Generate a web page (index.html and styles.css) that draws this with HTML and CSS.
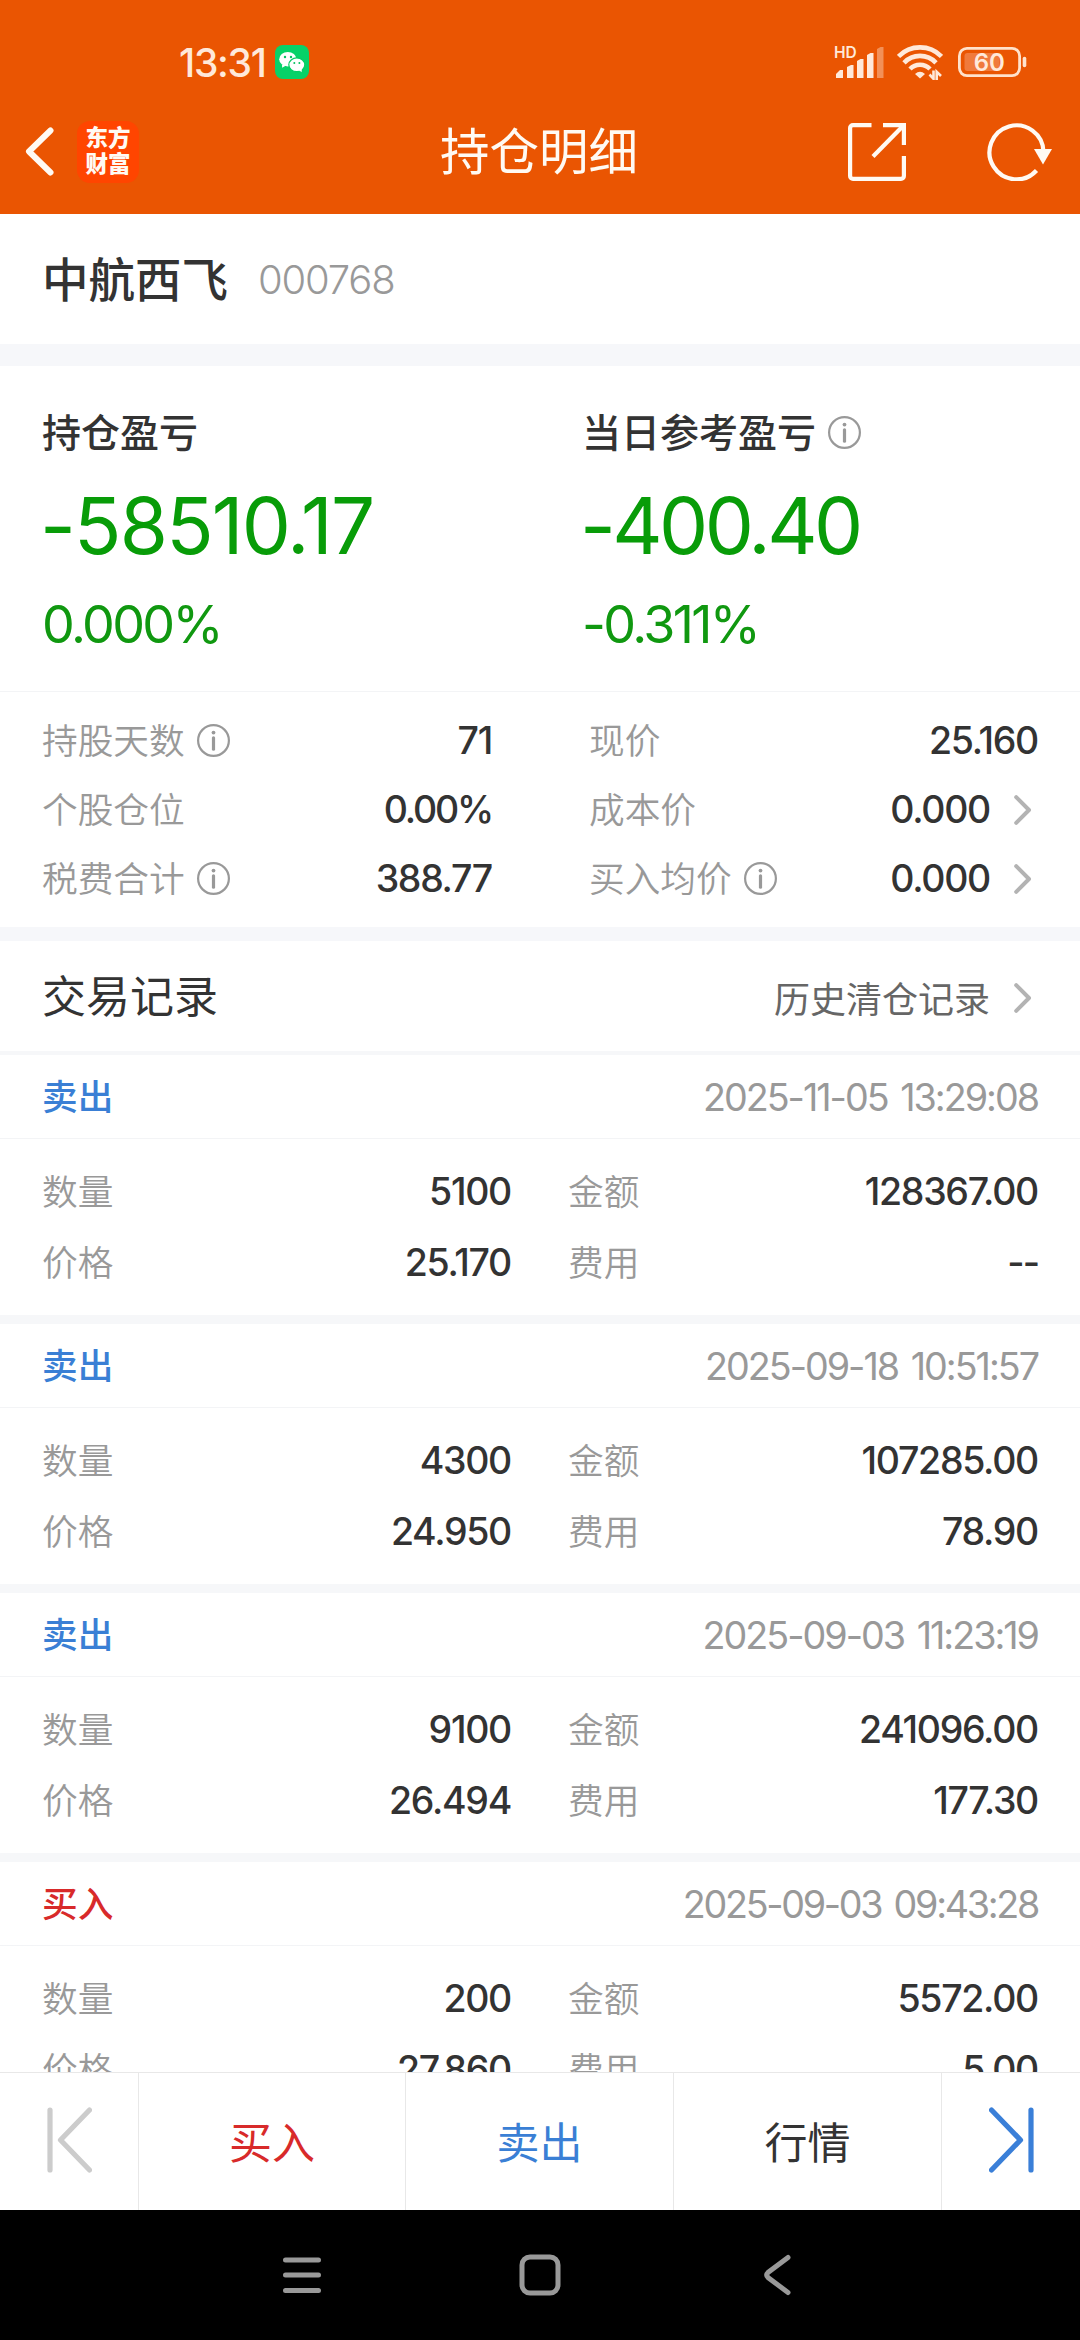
FILE: index.html
```html
<!DOCTYPE html>
<html lang="zh-CN">
<head>
<meta charset="utf-8">
<title>持仓明细</title>
<link rel="stylesheet" href="styles.css">
</head>
<body>
<svg width="0" height="0" class="defs">
  <symbol id="info" viewBox="0 0 33 33"><circle cx="16.5" cy="16.5" r="15.4" fill="none" stroke="#999" stroke-width="2.2"/><circle cx="16.5" cy="8.6" r="1.9" fill="#999"/><path d="M16.5 13.8V25.2" stroke="#999" stroke-width="3.2" stroke-linecap="round"/></symbol>
  <symbol id="chev" viewBox="0 0 18 30"><path d="M2.2 2.2L15 15L2.2 27.8" fill="none" stroke="#b3b3b3" stroke-width="4" stroke-linecap="round" stroke-linejoin="round"/></symbol>
</svg>
<div class="screen">
  <header class="top">
    <div class="status">
      <div class="status-left">
        <span class="clock">13:31</span>
        <svg class="wechat" viewBox="0 0 34 34"><rect width="34" height="34" rx="8" fill="#07d268"/><ellipse cx="12.8" cy="14.2" rx="8.6" ry="7.3" fill="#fff"/><path d="M7 19.5L7.2 22.8L11 20.5Z" fill="#fff"/><circle cx="10" cy="12" r="1.2" fill="#07c160"/><circle cx="16" cy="12" r="1.2" fill="#07c160"/><ellipse cx="21.8" cy="19.8" rx="8" ry="6.9" fill="#fff" stroke="#07cd64" stroke-width="1.2"/><path d="M24 25L26.6 27.2L26.8 24Z" fill="#fff"/><circle cx="19.3" cy="18" r="1" fill="#07c160"/><circle cx="24.4" cy="18" r="1" fill="#07c160"/></svg>
      </div>
      <div class="status-right">
        <svg class="signal" viewBox="0 0 52 34"><text x="0" y="13" class="hd">HD</text><g fill="#ffe9da"><path d="M2 33V29L6 25H9V33Z"/><path d="M13 33V22L17 20H19.5V33Z"/><path d="M23 33V16L26.500 14H29.500V33Z"/><path d="M33 33V10L36.500 8H39.500V33Z"/><path d="M43 33V4L46.500 2H49.500V33Z" opacity=".4"/></g></svg>
        <svg class="wifi" viewBox="0 0 46 36"><g fill="none" stroke="#ffe9da" stroke-width="4.6"><path d="M1.500 12.500A30 30 0 0 1 44.500 12.500"/><path d="M7 18.800A22 22 0 0 1 39 18.800"/><path d="M13 25A14 14 0 0 1 33 25"/></g><path d="M18 30Q23 25.500 28 30L23 34.500Z" fill="#ffe9da"/><path d="M32.500 30.500L36.500 34.800V26.500M39.700 36V27.800L44 32" fill="none" stroke="#ffe9da" stroke-width="2.600"/></svg>
        <svg class="battery" viewBox="0 0 69 30"><rect x="1.400" y="1.400" width="60.200" height="27.200" rx="7.500" fill="none" stroke="#ffe2cc" stroke-width="2.800"/><rect x="6.500" y="6" width="35" height="18" rx="3" fill="#f07a3c"/><path d="M66.500 11.500V18.500" stroke="#ffe2cc" stroke-width="3.600" stroke-linecap="round"/><text x="31.300" y="23.700" text-anchor="middle" class="level">60</text></svg>
      </div>
    </div>
    <div class="titlebar">
      <div class="title-left">
        <svg class="back" viewBox="0 0 29 49"><path d="M25.500 3.500L4 24.500L25.500 45.500" fill="none" stroke="#fffaf3" stroke-width="6" stroke-linecap="round" stroke-linejoin="round"/></svg>
        <div class="logo"><span>东方</span><span>财富</span></div>
      </div>
      <h1 class="title">持仓明细</h1>
      <div class="title-right">
        <svg class="share" viewBox="0 0 58 58"><g fill="none" stroke="#fffaf3" stroke-width="4.200"><path d="M23.500 2.100H5A2.900 2.900 0 0 0 2.100 5V53A2.900 2.900 0 0 0 5 55.900H53A2.900 2.900 0 0 0 55.900 53V33"/><path d="M35 2.100H55.900V22"/><path d="M25 33.500L54.500 3.500"/></g></svg>
        <svg class="reload" viewBox="0 0 66 58"><path d="M56.500 29A27 27 0 1 0 49.500 47.500" fill="none" stroke="#fffaf3" stroke-width="4.200"/><path d="M47 26H65L56 41.500Z" fill="#fffaf3"/></svg>
      </div>
    </div>
  </header>

  <main class="content">
    <section class="stock"><span class="stock-name">中航西飞</span><span class="stock-code">000768</span></section>

    <section class="profit">
      <div class="profit-col">
        <div class="profit-label">持仓盈亏</div>
        <div class="profit-value total">-58510.17</div>
        <div class="profit-rate">0.000%</div>
      </div>
      <div class="profit-col">
        <div class="profit-label">当日参考盈亏<svg class="info"><use href="#info"/></svg></div>
        <div class="profit-value today">-400.40</div>
        <div class="profit-rate">-0.311%</div>
      </div>
    </section>

    <section class="stats">
      <div class="stats-col">
        <div class="stat"><span class="label">持股天数<svg class="info"><use href="#info"/></svg></span><b class="num">71</b></div>
        <div class="stat"><span class="label">个股仓位</span><b class="num percent">0.00%</b></div>
        <div class="stat"><span class="label">税费合计<svg class="info"><use href="#info"/></svg></span><b class="num">388.77</b></div>
      </div>
      <div class="stats-col">
        <div class="stat"><span class="label">现价</span><b class="num">25.160</b></div>
        <div class="stat"><span class="label">成本价</span><b class="num">0.000</b><svg class="chev"><use href="#chev"/></svg></div>
        <div class="stat"><span class="label">买入均价<svg class="info"><use href="#info"/></svg></span><b class="num">0.000</b><svg class="chev"><use href="#chev"/></svg></div>
      </div>
    </section>

    <section class="records-head"><h2 class="records-title">交易记录</h2><span class="history">历史清仓记录</span><svg class="chev"><use href="#chev"/></svg></section>

    <article class="trade">
      <div class="trade-head"><span class="side sell">卖出</span><time class="date">2025-11-05 13:29:08</time></div>
      <div class="trade-body">
        <div class="cell"><span class="label">数量</span><b class="num">5100</b></div><div class="cell"><span class="label">金额</span><b class="num">128367.00</b></div>
        <div class="cell"><span class="label">价格</span><b class="num">25.170</b></div><div class="cell"><span class="label">费用</span><b class="num none">--</b></div>
      </div>
    </article>
    <article class="trade">
      <div class="trade-head"><span class="side sell">卖出</span><time class="date">2025-09-18 10:51:57</time></div>
      <div class="trade-body">
        <div class="cell"><span class="label">数量</span><b class="num">4300</b></div><div class="cell"><span class="label">金额</span><b class="num">107285.00</b></div>
        <div class="cell"><span class="label">价格</span><b class="num">24.950</b></div><div class="cell"><span class="label">费用</span><b class="num">78.90</b></div>
      </div>
    </article>
    <article class="trade">
      <div class="trade-head"><span class="side sell">卖出</span><time class="date">2025-09-03 11:23:19</time></div>
      <div class="trade-body">
        <div class="cell"><span class="label">数量</span><b class="num">9100</b></div><div class="cell"><span class="label">金额</span><b class="num">241096.00</b></div>
        <div class="cell"><span class="label">价格</span><b class="num">26.494</b></div><div class="cell"><span class="label">费用</span><b class="num">177.30</b></div>
      </div>
    </article>
    <article class="trade">
      <div class="trade-head"><span class="side buy">买入</span><time class="date tight">2025-09-03 09:43:28</time></div>
      <div class="trade-body">
        <div class="cell"><span class="label">数量</span><b class="num">200</b></div><div class="cell"><span class="label">金额</span><b class="num">5572.00</b></div>
        <div class="cell"><span class="label">价格</span><b class="num">27.860</b></div><div class="cell"><span class="label">费用</span><b class="num">5.00</b></div>
      </div>
    </article>
  </main>

  <nav class="actions">
    <div class="action"><svg class="step" viewBox="0 0 45 66"><path d="M3 3V63M42.500 3L13.500 33L42.500 63" fill="none" stroke="#ccc" stroke-width="5.200" stroke-linecap="round" stroke-linejoin="round"/></svg></div>
    <div class="action buy">买入</div>
    <div class="action sell">卖出</div>
    <div class="action">行情</div>
    <div class="action"><svg class="step" viewBox="0 0 45 66"><path d="M42 3V63M2.500 3L31.500 33L2.500 63" fill="none" stroke="#3a7fd8" stroke-width="5.200" stroke-linecap="round" stroke-linejoin="round"/></svg></div>
  </nav>

  <footer class="system">
    <svg class="sys" viewBox="0 0 42 42"><path d="M4.500 6H37.500M4.500 21H37.500M4.500 36.500H37.500" stroke="#999" stroke-width="5" stroke-linecap="round"/></svg>
    <svg class="sys" viewBox="0 0 42 42"><rect x="3" y="3" width="36" height="36" rx="8" fill="none" stroke="#999" stroke-width="5"/></svg>
    <svg class="sys" viewBox="0 0 42 42"><path d="M31 3.500L11 18.500Q8.500 21 11 23.500L31 38.500" fill="none" stroke="#999" stroke-width="5" stroke-linecap="round"/></svg>
  </footer>
</div>
</body>
</html>
```
FILE: styles.css
```css
* { box-sizing: border-box; }
body { margin: 0; background: #fff; color: #333; font-family: Inter, "Noto Sans CJK SC", sans-serif; }
svg { display: block; flex: none; }
.defs { position: absolute; }
.screen { width: 1080px; height: 2340px; display: flex; flex-direction: column; overflow: hidden; }

.top { height: 214px; flex: none; background: #ea5502; }
.status { height: 120px; padding: 4px 53px 0 179px; display: flex; justify-content: space-between; align-items: center; color: #ffe9da; }
.status-left, .status-right { display: flex; align-items: center; }
.status-left { gap: 9px; }
.clock { font-size: 39px; font-weight: 500; letter-spacing: -1.3px; }
.wechat { width: 34px; height: 34px; }
.signal { width: 52px; height: 34px; margin-right: 11px; overflow: visible; }
.wifi { width: 46px; height: 36px; margin-right: 15px; }
.battery { width: 69px; height: 30px; }
.hd { font: 600 15.5px Inter, sans-serif; fill: #ffe9da; }
.level { font: 600 24px Inter, sans-serif; fill: #ffe9da; }
.titlebar { height: 63px; padding: 0 27px 0 25px; display: grid; grid-template-columns: 1fr auto 1fr; align-items: center; }
.title-left { display: flex; align-items: center; gap: 23px; }
.back { width: 29px; height: 49px; }
.logo { width: 62px; height: 62px; border-radius: 13px; background: #ff4500; color: #fffaf3; display: flex; flex-direction: column; align-items: center; justify-content: center; font-size: 22.500px; font-weight: 900; line-height: 26px; padding-bottom: 2px; }
.title { margin: 0; font-size: 49.500px; font-weight: 400; line-height: 60px; color: #fffaf3; }
.title-right { display: flex; justify-content: flex-end; gap: 81px; }
.share { width: 58px; height: 58px; }
.reload { width: 66px; height: 58px; }

.content { flex: 1; min-height: 0; overflow: hidden; }
.stock { height: 130px; padding: 0 42px; display: flex; align-items: center; gap: 30px; }
.stock-name { font-size: 46.500px; font-weight: 500; padding-bottom: 6px; }
.stock-code { font-size: 40px; font-weight: 350; letter-spacing: -1.2px; color: #999; }
.profit { border-top: 22px solid #f6f7fa; height: 347px; padding-top: 47px; display: grid; grid-template-columns: 540px 540px; }
.profit-col { padding-left: 42px; }
.profit-label { display: flex; align-items: center; gap: 12px; height: 39px; font-size: 39px; font-weight: 500; line-height: 39px; }
.profit-value { height: 80px; margin: 34px 0 0 -2px; font-size: 78px; line-height: 80px; color: #089c08; }
.total { letter-spacing: -1.8px; }
.today { letter-spacing: -3.6px; }
.profit-rate { height: 60px; margin-top: 29px; font-size: 52px; line-height: 60px; letter-spacing: -2.6px; color: #109810; }
.info { width: 33px; height: 33px; }
.stats { border-top: 1px solid #f3f4f6; height: 236px; padding: 14px 42px 0; display: grid; grid-template-columns: 450px 449px; justify-content: space-between; }
.stat, .cell { display: flex; align-items: center; }
.stat { height: 69px; }
.label { display: flex; align-items: center; gap: 12px; font-size: 35.700px; line-height: 40px; font-weight: 350; color: #999; flex: 1; }
.num { font-size: 37.500px; font-weight: 500; line-height: 40px; letter-spacing: -1.3px; }
.percent { letter-spacing: -2.2px; }
.none { letter-spacing: -2px; }
.chev { width: 18px; height: 30px; margin: 0 6px 0 24px; }
.records-head { border-top: 14px solid #f6f7fa; height: 124px; padding: 3px 42px 0; display: flex; align-items: center; }
.records-title { margin: 0; flex: 1; font-size: 44px; font-weight: 400; padding-bottom: 8px; }
.history { font-size: 36px; color: #666; padding-bottom: 2px; }

.trade { height: 269px; border-top: 9px solid #f6f7f9; }
.records-head + .trade { height: 264px; border-top-width: 4px; }
.trade-head { height: 84px; padding: 0 42px; display: flex; align-items: center; justify-content: space-between; border-bottom: 1px solid #f3f4f6; }
.side { font-size: 35.700px; font-weight: 500; padding-bottom: 4px; }
.sell { color: #3a7fd5; }
.buy { color: #d82a2a; }
.date { font-size: 37.700px; letter-spacing: -2px; word-spacing: 4px; color: #999; }
.tight { letter-spacing: -2.3px; }
.trade-body { padding: 17px 42px 0; display: grid; grid-template-columns: 469px 470px; column-gap: 57px; grid-auto-rows: 71px; }

.actions { height: 138px; flex: none; border-top: 1px solid #e8e8e8; background: #fff; display: grid; grid-template-columns: 139px 267px 268px 268px 138px; }
.action { display: flex; align-items: center; justify-content: center; font-size: 43px; border-right: 1px solid #e8e8e8; padding-bottom: 4px; }
.action:last-child { border-right: 0; }
.step { width: 45px; height: 66px; }
.system { height: 130px; flex: none; background: #000; display: flex; justify-content: center; align-items: center; gap: 196px; }
.sys { width: 42px; height: 42px; }
```
